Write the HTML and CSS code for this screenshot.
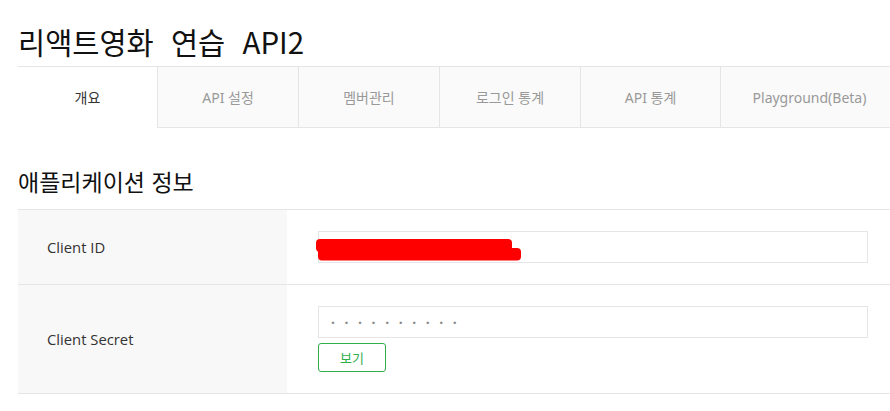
FILE: index.html
```html
<!DOCTYPE html>
<html lang="ko">
<head>
<meta charset="utf-8">
<title>리액트영화 연습 API2</title>
<link rel="stylesheet" href="styles.css">
</head>
<body>
<div class="page">
  <h1 class="app-title">리액트영화 연습 API2</h1>
  <nav class="tabs">
    <a class="tab tab-first is-active">개요</a>
    <a class="tab">API 설정</a>
    <a class="tab">멤버관리</a>
    <a class="tab">로그인 통계</a>
    <a class="tab tab-narrow">API 통계</a>
    <a class="tab tab-last">Playground(Beta)</a>
  </nav>

  <h2 class="section-title">애플리케이션 정보</h2>
  <div class="info-table">
    <div class="info-row">
      <div class="info-label">Client ID</div>
      <div class="info-value">
        <div class="field">
          <div class="field-box"></div>
          <svg class="redact" width="206" height="22" viewBox="0 0 206 22">
            <rect x="0" y="0" width="196" height="13" rx="4" fill="#ff0000"/>
            <rect x="2" y="9" width="203" height="12.5" rx="4" fill="#ff0000"/>
          </svg>
        </div>
      </div>
    </div>
    <div class="info-row">
      <div class="info-label">Client Secret</div>
      <div class="info-value">
        <div class="field-box secret"><span class="dots">··········</span></div>
        <button class="btn-view" type="button">보기</button>
      </div>
    </div>
  </div>
</div>
</body>
</html>
```

FILE: styles.css
```css
html, body {
  margin: 0;
  padding: 0;
  background: #fff;
  overflow: hidden;
}

body {
  font-family: "Noto Sans CJK KR", "Noto Sans", sans-serif;
  color: #333;
}

.page {
  width: 900px;
  padding-left: 18px;
}

.app-title {
  margin: 0;
  padding-top: 16px;
  font-size: 29.5px;
  line-height: 50px;
  font-weight: 400;
  color: #111;
  word-spacing: 9px;
}

.tabs {
  display: flex;
  border-top: 1px solid #e5e5e5;
}

.tab {
  box-sizing: border-box;
  width: 141px;
  height: 61px;
  display: flex;
  align-items: center;
  justify-content: center;
  background: #fafafa;
  border-left: 1px solid #e5e5e5;
  border-bottom: 1px solid #e5e5e5;
  font-family: "Noto Sans", "Noto Sans CJK KR", sans-serif;
  font-size: 14px;
  color: #999;
}

.tab-first {
  width: 139px;
  border-left: none;
}

.tab-narrow {
  width: 140px;
}

.tab-last {
  width: 178px;
}

.tab.is-active {
  background: #fff;
  border-bottom-color: #fff;
  color: #333;
}

.section-title {
  margin: 0;
  padding-top: 36px;
  height: 81px;
  box-sizing: border-box;
  font-size: 23px;
  line-height: 34px;
  font-weight: 400;
  color: #111;
}

.info-table {
  border-top: 1px solid #e5e5e5;
}

.info-row {
  display: flex;
  border-bottom: 1px solid #e5e5e5;
}

.info-label {
  width: 269px;
  flex: none;
  box-sizing: border-box;
  padding-left: 29px;
  background: #f8f8f8;
  display: flex;
  align-items: center;
  font-family: "Open Sans", "Noto Sans CJK KR", sans-serif;
  font-size: 14.8px;
  color: #333;
}

.info-value {
  padding: 21px 0 21px 31px;
  display: flex;
  flex-direction: column;
  align-items: flex-start;
}

.field {
  position: relative;
}

.field-box {
  box-sizing: border-box;
  width: 550px;
  height: 32px;
  border: 1px solid #e5e5e5;
  background: #fff;
  display: flex;
  align-items: center;
  padding-left: 12px;
}

.redact {
  position: absolute;
  left: -2px;
  top: 8px;
  display: block;
}

.dots {
  font-family: "Noto Sans", sans-serif;
  font-size: 14px;
  letter-spacing: 9.6px;
  color: #888;
  font-weight: 700;
}

.btn-view {
  margin-top: 5px;
  box-sizing: border-box;
  width: 68px;
  height: 29px;
  border: 1px solid #2fae4a;
  border-radius: 3px;
  background: #fff;
  color: #2fae4a;
  font-family: "Noto Sans CJK KR", sans-serif;
  font-size: 13px;
  padding: 0;
}
```
